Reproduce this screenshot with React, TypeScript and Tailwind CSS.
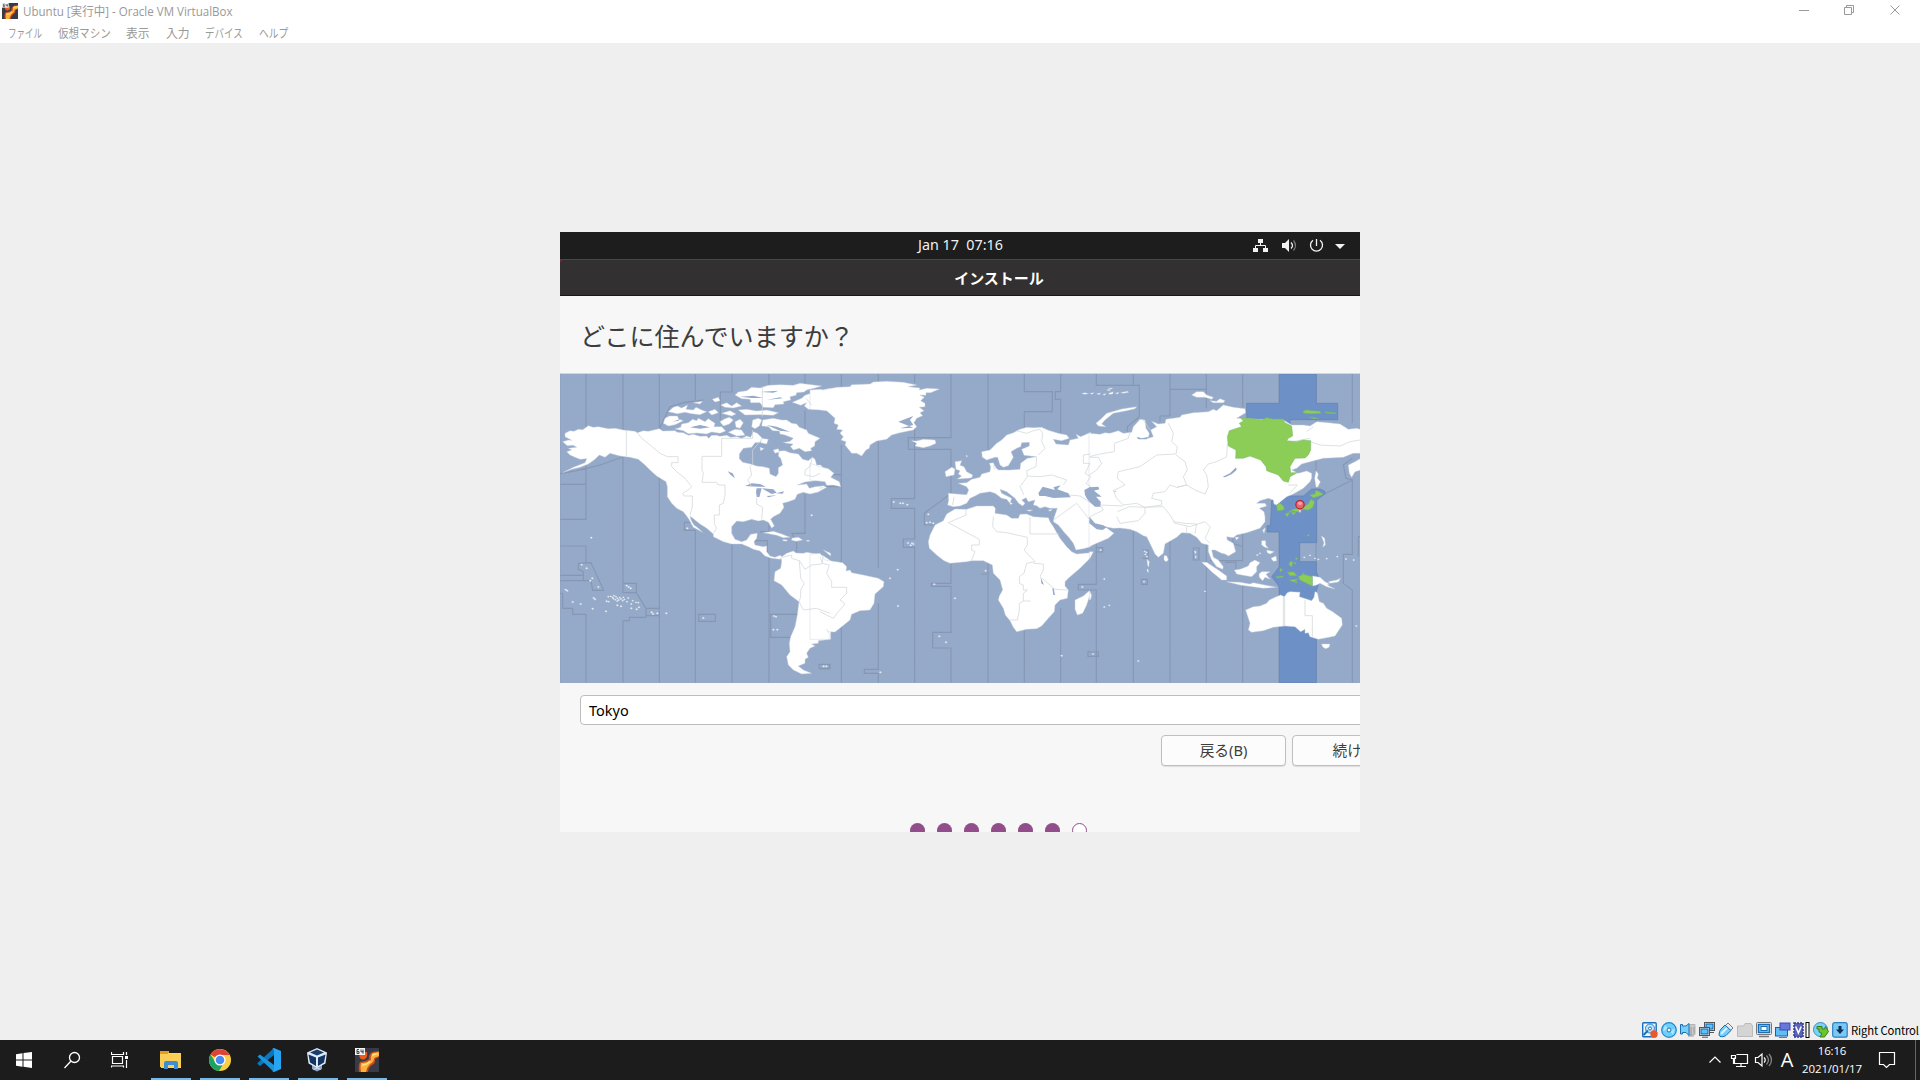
import React from "react";

const UI = "font-['Open_Sans','Noto_Sans_CJK_JP',sans-serif]";
const GUEST = "font-['Noto_Sans','Noto_Sans_CJK_JP',sans-serif]";

function GuestLogo({ className }: { className: string }) {
  return (
    <svg viewBox="0 0 24 24" className={className}>
      <rect width="24" height="24" fill="#383a47" />
      <path d="M24 3 L17 4 Q13 7 14 11 Q10 14 5 14 Q3 17 4 24 H13 Q13 20 17 17 Q21 15 20 11 L24 9Z" fill="#c4501a" />
      <path d="M24 4 L18 5 Q15 8 16 12 Q12 15 6 15 Q5 18 6 24 H11 Q12 19 15 16 Q19 14 19 10 L24 8Z" fill="#fdb13c" />
      <path d="M17 7 L23 5.500 M7 17 Q12 17 15 13" stroke="#ffe28a" strokeWidth="1.4" fill="none" />
      <path d="M4 8 Q6 13 10 11 Q13 9 12 4 L8 4Z" fill="#ef5a1b" />
      <rect width="10" height="7" fill="#f4f4f4" />
      <path d="M4 1.5H2V5.5H4V3.5H2M6 1.5V3.8H8.5M8 1.5V5.7" stroke="#333" strokeWidth=".9" fill="none" />
    </svg>
  );
}

const menus = [
  { t: "ファイル", w: "w-[50px]", s: "scale-x-[0.71]" },
  { t: "仮想マシン", w: "w-[68px]", s: "scale-x-[0.88]" },
  { t: "表示", w: "w-[40px]", s: "scale-x-[0.98]" },
  { t: "入力", w: "w-[39px]", s: "scale-x-[0.98]" },
  { t: "デバイス", w: "w-[54px]", s: "scale-x-[0.79]" },
  { t: "ヘルプ", w: "w-[40px]", s: "scale-x-[0.81]" },
];

function TitleBar() {
  return (
    <header className={`h-[43px] shrink-0 bg-white text-[#999] ${UI}`}>
      <div className="flex h-[22px] items-center justify-between pl-[2px]">
        <div className="flex items-center gap-[5px]">
          <GuestLogo className="h-4 w-4" />
          <span className="origin-left whitespace-nowrap pt-[2px] text-[12px] leading-[20px] scale-x-[0.962]">Ubuntu [実行中] - Oracle VM VirtualBox</span>
        </div>
        <svg width="140" height="22" fill="none" stroke="#999">
          <path d="M19 10.5H29" />
          <path d="M64.5 7.5H71.5V14.5H64.5ZM66.500 7V5.500H73.500V12.500H72" />
          <path d="M110.500 5.500L119.500 14.500M119.500 5.500L110.500 14.500" />
        </svg>
      </div>
      <nav className="flex h-[21px] pl-2 pt-[1px]">
        {menus.map((m) => (
          <div key={m.t} className={`${m.w} shrink-0 text-[12px] leading-[22px]`}>
            <span className={`inline-block origin-left whitespace-nowrap ${m.s}`}>{m.t}</span>
          </div>
        ))}
      </nav>
    </header>
  );
}

const islands = (pts: number[][], r = 3) =>
  pts.map(([x, y], i) => <ellipse key={i} cx={x} cy={y} rx={r} ry={r * 0.75} />);

function WorldMap() {
  return (
    <svg viewBox="0 0 2400 927" width="800" height="309" className="block shrink-0">
      <rect width="2400" height="927" fill="#95a9c9" />
      <g stroke="#8697b3" strokeWidth="3.4" fill="none">
        <g transform="translate(0 -12)">
          <path d="M78 12V343M0 343H78V448H0M0 528H78V578M55 580L93 578L131 661H98L93 632H0M55 580V598L70 605V632M0 616H70M8 670V715H38V733H78V938M0 670H8M189 12V180M189 262V668M189 640H229V668H189M229 668L258 715V742H208V752H189V938M258 715H298V737H258M298 12V176L330 110L370 98L430 90M298 320V715M298 737V938M406 12V90M400 457H373V481H406V938M516 12V66H481V150M516 522V938M416 733H466V754H416ZM627 12V50M627 490V440M627 565V938M627 733H715M632 733V802H692M735 12V50M735 120V180M735 372V490H696L710 520V545M582 512H622V558M600 485H640M0 311L50 302L120 285L190 260M775 883H810V896H778V883" />
        </g>
        <g transform="translate(780 -12)">
          <path d="M64 12V50M64 225V938M28 883V896H0M175 12V35M175 213V595M175 700V898H133V910H175V938M284 12V38M284 150V386H214V415H284V507H250V532H284V938M393 12V203H265V238H393V370L313 430V465H345M393 580V640H334V649H393V787H338V834H393V938M504 12V250M504 580V612H484M504 612V938M613 12V65H697V125H613V175M613 780V938M722 12V65H706V88H722V200M722 715V938M810 643H775V660H810M810 845H804V860H810M15 314H64M15 350H60" />
        </g>
        <g transform="translate(1590 -12)">
          <path d="M19 12V46H148V140L112 170V185M0 643H19V510M0 660H19V938M0 846H25V859H0M19 533H38V546H19M130 12V46M130 475V938M240 12V138M240 58H349V12M240 138H210V155M240 510V938M349 58V115M349 520V938M458 12V112M458 490V572H360M458 648V938M568 12V938M678 12V938M787 12V160M787 265L760 285L768 325L787 330L703 372M787 330V553H760V640L787 660V938M158 540H175V565H158M154 628H172V643H154ZM310 534H327V570H310ZM405 577H438V600M429 500V520L458 530M810 500H805V560M640 770L575 805" />
        </g>
      </g>
      <g fill="#6d91c6" stroke="#6280b0" strokeWidth="2" transform="translate(1590 -12)">
        <path d="M568 12H679V100H743V149H600V180H470V100H568Z" />
        <path d="M600 378H640L665 357H690L705 364V372L680 390V518H629V575H679V605L690 630L680 660L667 692H630L568 680V650L545 620L568 590V486H531V467H541L545 392L575 380Z" />
        <path d="M568 750H679V938H568Z" />
      </g>
      <g fill="#fff" stroke="#c6d1db" strokeWidth="1.3" strokeLinejoin="round">
        <g transform="translate(0 -12)">
          <path d="M15 190L30 182L42 184L55 178L68 179L85 167L100 172L115 170L145 176L165 175L190 180L225 184L232 188L250 182L265 184L298 176L308 183L345 182L352 187L370 188L385 196L400 193L420 199L440 198L446 205L455 196L470 196L480 199L500 196L512 202L530 200L545 205L560 198L572 202L580 185L592 190L607 205L600 217L585 218L575 232L550 235L538 252L538 266L548 277L575 283L590 288L610 290L628 295L630 312L648 320L655 310L655 293L668 285L662 265L655 258L657 243L675 242L690 248L715 252L728 268L745 272L757 262L765 268L770 285L782 285L795 300L812 305V325L790 323L780 330L760 333L735 336L712 345L740 342L748 355L765 350L790 347L800 352L775 366L750 372L730 367L712 373L705 388L685 395L668 400L672 412L660 430L640 440L632 448L643 468L635 474L625 457L610 450L595 453L575 448L550 455L530 453L515 470V490L525 508L545 515L560 510L572 493L592 490L590 505L582 515L585 525L610 530L620 528V545L630 558L645 562L660 556L668 562L660 568L635 565L615 558L600 543L580 538L565 530L545 522L515 522L490 515L460 500V492L440 475L420 462L390 438L393 450L402 465L415 475L428 487L400 472L385 445L370 425L350 415L335 400L322 380V350L318 335L290 318L270 300L255 285L235 268L210 262L180 258L150 250L135 262L118 255L105 268L85 282L60 292L35 298L8 308L40 292L75 278L80 266L60 268L45 262L30 255L20 245L35 240L25 235L50 232L40 226L22 227L8 215L25 210L35 211L15 200Z" />
          <path d="M525 75L535 66L560 62L575 52L600 54L625 46L660 44L700 46L720 40L785 48L765 54L740 60L732 66L710 68L708 76L690 80L692 90L670 95L672 102L645 104L640 113L610 112L600 98L572 98L570 88L545 86Z" />
          <path d="M575 170L578 150L595 145L605 150L598 168L585 176ZM608 150L640 145L665 150L680 150L695 160L710 162L718 172L740 180L745 190L780 205L765 215L764 228L752 235L755 242L735 245L718 235L700 240L690 228L675 225L670 218L690 214L700 205L675 195L660 192L658 183L638 182L625 170L605 168Z" />
          <path d="M310 160L315 145L328 138L352 138L357 148L370 152L345 164L325 168ZM345 177L362 172L365 162L385 158L398 148L410 152L415 145L435 155L445 146L465 160L462 170L485 170L497 183L480 190L455 186L440 192L410 189L385 191L370 182Z" />
          <path d="M325 125L340 112L352 108L365 114L383 105L378 118L400 120L408 112L425 120L440 125L420 134L395 131L375 127L352 131ZM400 98L428 94L420 102ZM457 88L475 82L480 92L465 96ZM482 105L500 98L515 108L530 98L545 108L520 114L495 112ZM445 125L465 118L475 128L455 135ZM485 130L510 122L528 132L515 138ZM535 120L560 118L590 123L620 120L655 128L640 136L600 134L555 135ZM480 155L495 146L508 142L520 150L508 162L490 168ZM525 155L540 148L550 158L540 175L528 172ZM505 187L525 178L545 180L555 196L530 198ZM605 205L625 208L620 222L602 218ZM640 240L655 236L658 246L645 250ZM600 232L612 236L602 242Z" />
          <path d="M697 97L725 85L735 76L775 62L812 55V125L780 118L745 118L733 108L740 98L722 106ZM610 488L640 484L665 492L690 502L670 503L650 496ZM697 504L715 502L728 510L708 514L694 510ZM668 509H680L682 513H670ZM740 511H748V514H740ZM790 540L812 558V550Z" />
          <path d="M663 562L680 550L700 543L708 549L730 550L740 547L770 552L790 557L812 572V808L775 812V820L755 822L765 828L750 835L740 850L745 862L735 868V880L715 888L730 900L755 910L725 912L700 900L685 885L680 860L690 845L688 820L692 800L705 770L712 735L717 695L690 675L665 645L642 632L645 605L662 595L665 575Z" />
          {islands([[65, 584], [80, 595], [97, 625], [91, 632], [115, 651], [17, 659], [22, 662], [38, 696], [62, 702], [101, 684], [105, 688], [98, 716], [138, 724], [94, 503], [200, 647], [206, 651], [212, 655], [275, 727], [279, 732], [292, 730], [319, 730], [430, 744], [642, 738], [648, 740], [640, 779], [652, 779], [755, 436], [140, 694], [172, 706], [183, 709], [214, 715], [230, 718], [237, 712], [382, 475]])}
          {islands([[145, 680], [152, 679], [158, 682], [162, 677], [168, 680], [160, 686], [166, 689], [172, 685], [176, 690], [183, 687], [188, 692], [193, 688], [179, 683], [190, 682], [172, 693], [205, 684], [201, 695], [218, 692], [214, 702], [228, 697], [235, 698], [146, 695]], 2.6)}
        </g>
        <g transform="translate(780 -12)">
          <path d="M-30 60L0 58L10 60L50 52L90 50L95 44L150 42L160 36L200 34L250 37L290 45L265 50L300 54L298 60L320 55L358 57L332 68L318 68L318 76L300 75L313 82L302 92L315 100V110L298 112L312 122L300 128L308 137L290 145L282 158L290 170L280 180L240 188L215 195L200 208L170 213L150 225L148 235L138 240L125 258L110 250L95 250L75 225L78 215L63 210L70 200L60 190L68 180L50 178L55 165L42 160L45 145L20 122L0 120L-30 118Z" />
          <path d="M-30 280L0 290L25 296L42 310L32 322L58 335L62 350L40 345L20 346L15 335L-30 330ZM0 350L10 352L0 358Z" />
          <path d="M-30 553L0 550L15 570L40 574L68 578L80 590L78 603L90 600L95 608L130 615L175 625L192 635L190 650L165 672L162 700L150 720L120 722L95 733L90 750L65 770L45 786L25 785L20 778L30 797L25 808H-30Z" />
          <path d="M385 370L410 372L440 374L446 360L440 350L415 340L440 338L455 328L480 322L485 312L510 305L512 290L508 280L520 278L525 290L535 300L570 300L600 298L602 280L622 265L650 260L612 256L605 238L628 228V217L605 218L602 230L590 235L573 245L580 262L565 287L550 292L540 285L533 262L525 262L500 270L487 262L485 245L510 240L530 220L545 210L560 195L580 188L600 178L620 172L640 173L665 172L685 181L715 190L740 195L748 205L725 212L700 208L708 222L745 225L750 210L775 205L768 193L782 200L812 187V530L790 536L768 540L760 520L745 500L735 490L715 465L700 455L702 443L712 415L690 415L675 410L660 415L650 407L640 405L645 390L625 395L618 383L605 390L615 400L608 408L596 400L585 385L560 365L540 358L545 370L575 385L570 400L560 388L545 385L525 370L510 365L480 370L465 378L450 385L440 400L420 408L400 410L383 405L386 390Z" />
          <path d="M405 417L440 418L470 408L520 408L526 415L525 430L545 433L560 435L575 445L595 445L600 433L620 432L640 440L685 443L690 455L700 470L720 505L740 530L755 545L770 552L812 548V560L805 570L780 595L745 625L735 635V648L745 660L742 685L720 690L705 705L703 725L685 745L665 768L650 776L620 778L590 785L580 772L570 752L556 735L550 715L535 690L538 678L548 660L540 630L520 610L517 585L490 572L455 572L440 575L390 580L372 572L350 555L328 535L325 515L330 495L345 465L370 452L380 432Z" />
          <path d="M405 275L425 272L420 286L432 290L440 305L458 315L455 323L445 325L412 327L425 318L415 312L420 302L408 298ZM375 305L395 292L405 297L402 315L378 320ZM275 212L290 213L310 208L345 210L348 220L330 228L310 233L285 228L290 220ZM765 690L790 678L808 662L812 668L800 705L788 730L772 735L765 718ZM568 397L578 400L572 404ZM620 420L638 420L628 424ZM685 420L697 418L690 424ZM520 288L528 290L524 298ZM785 70L795 68L805 71L795 73ZM438 255L443 258L440 262Z" />
          {islands([[221, 396], [241, 400], [249, 400], [262, 404], [325, 433], [320, 458], [330, 457], [340, 460], [264, 519], [276, 520], [272, 526], [280, 522], [233, 599], [210, 625], [343, 643], [405, 685], [234, 708], [358, 799], [378, 817], [181, 907], [725, 857], [497, 602], [787, 651], [11, 889], [19, 889]])}
        </g>
        <g transform="translate(1590 -12)">
          <path d="M-3 190L30 193L45 188L60 190L85 182L100 190L125 187L130 170L150 148L165 150L168 175L178 190L175 205L190 200L182 180L200 170L185 154L205 162L225 160L228 148L270 142L275 135L310 128L355 125L370 118L380 122L400 105L430 112L465 116L467 128L440 145L460 145L500 148L580 150L605 165L640 165L660 168L680 155L715 158L750 162L775 178L800 175L812 178V250H790L760 262L700 265L660 275L635 282L620 295L605 300L625 310L650 303L665 310L665 325L660 335L640 355L610 372L590 380L575 392L560 405L552 402L550 390L535 385L510 392L500 400L525 400L530 408L508 415L522 425L525 440V455L510 475L470 488L440 495L430 503L410 500L412 510L430 520L437 545L415 558L405 552L395 550L375 540L365 540L370 562L385 570L400 590L398 598L380 590L365 570L355 545V525L335 520L320 502L300 490L275 488L260 502L225 522L220 550L205 562L195 552L175 510L170 500L160 497L140 485L120 478L90 474L70 475L45 470L72 490L55 505L20 520L-3 530Z" />
          <path d="M18 160L35 145L50 130L95 117L140 110L135 116L110 122L70 130L45 150L35 162L48 170L25 168ZM305 75L320 65L340 65L350 75L370 82L365 88L345 82L320 82ZM360 92L380 94L390 86L405 92L400 98L370 98ZM678 302L685 312L682 325L691 335L684 350L678 352L674 325ZM775 285L795 275L812 265V300L795 305L785 322L778 310ZM335 577L350 577L385 600L410 618L410 630L395 630L365 605ZM410 635L450 637L480 642L490 638L560 652L520 655L450 645ZM433 600L450 598L475 588L480 578L495 570L510 578L500 590L500 605L485 620L455 615L440 612ZM507 612L515 605H540L528 613L540 628L525 622L518 632L508 622ZM515 512H527V525L535 535L525 532L515 525ZM530 540L553 545L540 552L532 548ZM543 565L558 558L560 572L550 574ZM518 480L526 474L522 490ZM435 502H447L440 510ZM222 557L230 557L235 570L228 575L222 570ZM667 618L690 622L705 635L718 642L712 645L735 657L710 650L690 640L680 645L667 648ZM715 635L740 630L752 625L745 636L720 640ZM-2 545L10 545L5 555L-2 568ZM-2 665L5 675L2 688L-2 690Z" />
          <path d="M467 720L490 710L510 708L530 700L538 690L555 682L572 675L583 680L592 668L600 665L630 667L628 680L665 692L672 682L675 665L682 668L688 695L700 700L710 715L728 725L755 745L757 765L735 798L710 803L685 808L660 800L655 788L645 790L645 778L632 785L615 770L585 768L550 772L520 782L485 787L475 780L480 760ZM695 822H720L717 832L707 836L698 831Z" />
          <path d="M0 70L12 68L6 73ZM20 71L32 69L28 74ZM38 74L48 70L44 76ZM50 60L58 58L60 63ZM56 70L70 65L68 72L58 73ZM76 70L86 67L84 72ZM92 68L112 64L116 67L100 70ZM55 54L68 55L62 58ZM169 544L171 548M171 568L178 575L176 590L173 588ZM172 596L175 600L175 608L171 602ZM312 542L319 545L316 552ZM316 556L320 560L316 566ZM694 498L704 505L706 525L698 532L702 518Z" />
          {islands([[164, 544], [169, 547], [166, 553], [171, 560], [32, 540], [43, 627], [58, 706], [43, 711], [162, 635], [345, 664], [145, 873], [9, 852], [643, 562], [660, 556], [675, 565], [685, 568], [710, 566], [742, 560], [768, 567], [791, 570], [799, 768], [502, 555], [510, 550]], 2.6)}
        </g>
      </g>
      <g fill="#95a9c9">
        <g transform="translate(0 -12)">
          <path d="M555 348L575 340L600 342L618 350L595 350ZM590 355H605L598 382L590 380L588 365ZM605 355L640 358L650 368L635 372L618 362ZM620 378L650 376L625 382ZM648 370L672 364L668 371ZM503 304L518 310L525 325L512 315Z" />
          <path d="M540 80L580 77L610 84L575 84ZM600 66L655 62L640 68ZM620 90L660 82L668 85ZM620 165L650 170L690 185L660 182ZM640 215L700 222L690 230ZM390 172L420 165L450 172L420 176ZM338 155L360 147L355 152Z" />
        </g>
        <g transform="translate(780 -12)">
          <path d="M655 370L668 350L685 355L705 360L700 352L722 346L712 358L745 370L752 382L700 384L675 378L658 378ZM793 360L812 350V400L800 385L795 375ZM662 622L672 645L664 640ZM697 655H701L705 675H700ZM235 155L280 138L270 150L280 165L240 175L280 173Z" />
        </g>
        <g transform="translate(1590 -12)">
          <path d="M-2 352L25 350L28 358L12 362L35 380L18 380L32 395V410L15 410L-2 395ZM-2 440L15 460L40 466L50 472L38 480L20 478L-2 460ZM398 320L420 310L438 292L440 300L425 313L405 322ZM140 200L155 205L178 200L170 208H145ZM75 362L80 365L70 364Z" />
        </g>
      </g>
      <g fill="none" stroke="#d0d6d7" strokeWidth="2.2" strokeLinejoin="round">
        <path transform="translate(0 -12)" d="M199 180V258M232 188L245 205L270 225L300 250L322 260H354V278H335V290L350 305L375 325L395 350L385 360L368 370L372 378H397V410L390 435M578 180V205H485V259H426V300L430 310L426 337H470L475 345H495V375L490 400L478 405V435H463V460L470 475L460 490M607 50V140M600 215L578 240V280L570 290L575 315L563 330L575 350M590 382V402L608 412L605 448M757 262L750 290L735 300V315L760 320L780 310M738 85L755 105M665 562L695 555V565L718 572L735 598L755 585L785 582L790 560M718 572L722 625L733 640L722 660V680L717 695M717 695L730 720L770 715L810 730" />
        <path transform="translate(780 -12)" d="M0 560L8 580L28 585L20 610L35 635V652H80V670L60 690L75 702L55 725L40 745L0 725M402 380L398 405M590 182L620 190L640 182L660 178L668 190L665 215L675 235L655 255M650 262L648 290L620 302L622 320L600 350L612 375M622 318L660 320L695 315L740 330L730 345M750 375L780 378L812 398M700 450L735 425L770 400L790 425L810 450M438 418V435L385 458L478 508V525H455V540L465 545L455 570M520 440L518 470L530 485L560 488L622 502M630 440V492H718M622 502V525L612 540L645 575L620 580L612 610L598 620V640L610 645V660H622L610 670V693H632M610 693L598 700V722L592 750H570M640 580L670 582V600L660 620L690 645L705 658L742 660M812 252L790 255V280H810L795 310L812 320L798 340L812 350" />
        <path transform="translate(1590 -12)" d="M120 188L115 205L73 220V245L30 252L-2 260M0 262H25L35 280L20 300L-2 315M160 150L180 180M235 160L250 190L245 215L262 230L258 252L200 255L150 290L85 305L82 325L105 345L70 362L80 385L100 405L140 400L165 412L215 405V392L185 385L190 370L225 365L240 345L260 352L290 345L280 320L292 300L285 275L258 255M260 352L290 345L315 360L345 372L355 350L350 315L340 300L355 282L380 275L410 260L412 220M0 440L40 420L30 405L100 408M82 425L118 410L165 412V430L145 452L90 460L80 440M165 412L220 410L240 435L255 460L300 470L345 455L360 470L355 485L345 505L360 520M250 455L285 460L320 462L315 490M290 470V490M580 680V768M584 680V768M645 690V737H667V800M650 185L670 170M660 215L690 225L750 228L780 215L810 210M605 215L660 205M595 345H622L600 370" />
      </g>
      <g transform="translate(1590 -12)" fill="#8ccd57" stroke="#74b66b" strokeWidth="1.5" strokeLinejoin="round">
        <path d="M450 142L465 145L490 146L515 150L530 143L552 148L578 147L585 158L605 168L608 198L595 205L590 212L620 215L640 210L662 212V240L655 255L645 264L615 265L600 290L602 308L622 308L600 320L595 337L580 333L565 315L530 302L528 290L512 270L480 258L460 265L437 265L438 240L415 228L412 200L418 182L455 170L448 160L460 153ZM640 124L650 120L665 122L690 124L692 130L660 131L640 129ZM705 126L735 128L738 131L710 129ZM660 141L685 145L670 146ZM560 405L570 400L580 408L583 418L575 421L562 422ZM660 375L675 372L678 361L700 372L690 377L670 383ZM663 388L674 395L668 412L655 420L640 418L620 425L608 423L590 430L610 418L640 412L655 402ZM585 432L598 430L592 440ZM603 428L618 425L612 434ZM625 620L640 613L667 620V648L650 640L630 630ZM592 607L612 606L620 617L600 617ZM598 577L608 574L606 590L598 586ZM558 620L580 618L578 622L560 623ZM570 595L578 600L570 605ZM598 630L625 628L610 636Z" />
        {islands([[655, 496], [619, 566], [615, 580], [640, 612], [618, 637]])}
        <path d="M626 418V427H633V418Z" fill="#ddd" stroke="#999" />
        <circle cx="630" cy="404" r="12.5" fill="#ed6570" stroke="#b9202c" strokeWidth="3.5" />
        <ellipse cx="630" cy="400" rx="7" ry="5" fill="#ffa0a5" stroke="none" />
      </g>
      <path d="M0 0V927" stroke="#8ea0be" strokeWidth="3" />
    </svg>
  );
}

function GuestScreen() {
  return (
    <section className={`flex h-[600px] w-[800px] shrink-0 flex-col overflow-hidden bg-[#f7f7f7] ${GUEST}`}>
      <div className="grid h-[27px] shrink-0 grid-cols-[1fr_auto_1fr] items-center bg-[#1d1d1d] text-[#f2f2f2]">
        <span />
        <span className="whitespace-pre pb-[2px] pl-[1px] text-[14.3px] leading-[24px]">Jan 17  07:16</span>
        <svg width="110" height="26" className="justify-self-end">
          <g fill="#f2f2f2">
            <path d="M8 6h5v4H8zM3 15h5v4H3zM13 15h5v4h-5z" />
            <path d="M10.500 10v3M5.500 15v-2.500h10V15" stroke="#f2f2f2" fill="none" />
            <path d="M32 10h3l4-4v13l-4-4h-3z" />
            <path d="M41 9.500q3 3 0 6" stroke="#f2f2f2" strokeWidth="1.300" fill="none" />
            <path d="M43.500 7.500q4 5 0 10" stroke="#777" strokeWidth="1.300" fill="none" />
            <path d="M63 7.300a6 6 0 1 0 7 0M66.500 6v7" stroke="#f2f2f2" strokeWidth="1.300" fill="none" />
            <path d="M85 11h10l-5 5z" />
          </g>
        </svg>
      </div>
      <div className="h-[37px] shrink-0 bg-[#a3182c]">
        <div className="h-full w-[878px] rounded-tl-[4px] border-b border-t border-b-[#1b1919] border-t-[#494648] bg-[#323031] text-center text-[15px] font-bold leading-[36px] text-white">インストール</div>
      </div>
      <h1 className="h-[78px] shrink-0 border-b border-[#d5d5d5] pl-5 text-[25.1px] leading-[80px] text-[#3d3d3d]">どこに住んでいますか？</h1>
      <WorldMap />
      <div className="flex h-[149px] w-[878px] shrink-0 flex-col pl-5 pt-3">
        <div className="h-[30px] rounded-[4px] border border-[#bdbdbd] bg-white pl-2 text-[14.500px] leading-[28px] text-black">Tokyo</div>
        <div className="mt-[10px] flex gap-[6px] pl-[581px] text-[14.700px] leading-[28px] text-[#3d3d3d]">
          <div className="h-[31px] w-[125px] rounded-[4px] border border-[#bfbfbf] bg-[#fcfcfc] text-center shadow-[0_1px_1px_rgba(0,0,0,0.1)]">戻る(B)</div>
          <div className="h-[31px] w-[125px] rounded-[4px] border border-[#bfbfbf] bg-[#fcfcfc] text-center shadow-[0_1px_1px_rgba(0,0,0,0.1)]">続ける</div>
        </div>
        <div className="mt-[57px] flex gap-3 pl-[330px]">
          {[0, 1, 2, 3, 4, 5].map((i) => (
            <span key={i} className="h-[15px] w-[15px] shrink-0 rounded-full bg-[#924d8b]" />
          ))}
          <span className="h-[15px] w-[15px] shrink-0 rounded-full border border-[#924d8b] bg-white" />
        </div>
      </div>
    </section>
  );
}

const BL = "#1c6eb4";
const statusIcons: React.ReactNode[] = [
  <>
    <rect x=".7" y=".7" width="13.500" height="14" rx="1" fill="#eaf7ff" stroke="#1a6fbd" strokeWidth="1.400" />
    <circle cx="8" cy="6.500" r="4.500" fill="#bfe6fc" stroke="#2c82c9" />
    <circle cx="8" cy="6.500" r="1.500" fill="#fff" stroke={BL} />
    <path d="M1.500 13L6 8.500" stroke={BL} strokeWidth="2" />
    <circle cx="12" cy="12" r="3.700" fill="#ee5828" />
  </>,
  <>
    <circle cx="8" cy="8" r="7.300" fill="#6cd0fb" stroke="#2088cc" strokeWidth="1.200" />
    <path d="M4 3l4 5-6 1zM12 13L8 8l6-1z" fill="#a9e6ff" />
    <circle cx="8" cy="8" r="2" fill="#fff" stroke={BL} />
  </>,
  <>
    <path d="M9 2.500h6v10H9z" fill="#c9c9c9" stroke="#b5b5b5" />
    <path d="M11 5v9M14 5v6M8 14h6" stroke="#999" />
    <path d="M.500 2.500h2V4H6l3-2.500v12L6 10.500H2.500V12h-2z" fill="#76cff8" stroke={BL} />
  </>,
  <>
    <rect x="5.500" y=".5" width="10" height="8" fill="#eee" stroke="#555" />
    <rect x="7" y="2" width="7" height="5" fill="#5cc4fb" stroke="#1560a3" />
    <path d="M10 10.500h5" stroke="#555" />
    <rect x=".5" y="5.500" width="10" height="8" fill="#eee" stroke="#555" />
    <rect x="2" y="7" width="7" height="5" fill="#58c4fc" stroke="#1560a3" />
    <path d="M3 15.200h6" stroke="#555" />
  </>,
  <>
    <path d="M10 1l5 5-2.500 2.500-5-5z" fill="#eee" stroke="#777" />
    <path d="M7 3l6 5.500-5 5q-3 2-6 1L1 13q0-4 2-6z" fill="#75cdfa" stroke={BL} />
    <path d="M3 12l6-6" stroke="#d6f4ff" strokeWidth="2" />
  </>,
  <path d="M.500 4H6.500L8 1.500H14L15.500 4v10.500H.5z" fill="#d4d4d4" stroke="#bbb" />,
  <>
    <rect x="0.500" y=".5" width="15" height="12" rx="1" fill="#eee" stroke="#777" />
    <rect x="2.500" y="2.500" width="11" height="8" fill="#7bcdf8" stroke={BL} strokeWidth="1.400" />
    <rect x="5" y="4.500" width="6" height="4" fill="#fff" stroke={BL} />
    <path d="M3 14.500h10" stroke="#777" strokeWidth="1.500" />
  </>,
  <>
    <rect x=".5" y="5.500" width="12" height="8.500" fill="#5fbff5" stroke="#1560a3" />
    <rect x="5" y="1" width="10" height="7" fill="#6777da" stroke="#3f4db5" />
    <path d="M4 15.500h8" stroke="#777" fill="none" />
  </>,
  <>
    <rect x="0" y="1" width="9" height="14" fill="#5963bb" stroke="#333e8d" strokeDasharray="2 1" strokeWidth="1.500" />
    <path d="M1.700 4.500l2.700 6.500L7.200 4.500" stroke="#fff" strokeWidth="1.600" fill="none" />
    <rect x="12" y=".5" width="3" height="15" fill="#fff" stroke="#000" />
  </>,
  <>
    <circle cx="7.500" cy="7.500" r="7" fill="#7ad2f8" stroke="#3a8fc8" />
    <path d="M4 4.500h5v2.500h2.500l1-2.500 3 5-4 5.500H7l2-3.500-3-1.500V7H4z" fill="#6cc52c" stroke="#3d7e12" />
  </>,
  <>
    <rect x=".7" y=".7" width="14.500" height="14.500" rx="2" fill="#7ac9f4" stroke="#2a7fbd" strokeWidth="1.200" />
    <path d="M6.500 4h3v3.500H12L8 12 4 7.500h2.500z" fill="#0e2f5b" />
  </>,
];

function StatusBar() {
  return (
    <div className="flex h-[20px] shrink-0 items-center justify-end gap-[3px] pr-[1px]">
      {statusIcons.map((icon, i) => (
        <svg key={i} width="16" height="16" viewBox="0 0 16 16" className="shrink-0 overflow-visible">{icon}</svg>
      ))}
      <span className="w-[68px] whitespace-nowrap font-['Noto_Sans_CJK_JP',sans-serif] text-[11.300px] leading-5 tracking-[-0.15px] text-black">Right Control</span>
    </div>
  );
}

const apps = [
  <svg key="e" width="24" height="24">
    <path d="M1 3h9v4H1z" fill="#dc9a17" /><path d="M2 5h20v15H2z" fill="#ffd868" /><path d="M1 4h8l1 1.500H22V19H1z" fill="#fbcf57" />
    <path d="M1 3h8v3H1z" fill="#e0a01c" /><path d="M5 21v-6q0-2 2-2h10q2 0 2 2v6h-4v-4H9v4z" fill="#3d8fd4" />
  </svg>,
  <svg key="c" width="24" height="24">
    <circle cx="12" cy="12" r="11" fill="#fbcd43" />
    <path d="M12 12L2.500 6.500A11 11 0 0 1 21.600 7H12z" fill="#db4437" />
    <path d="M12 12L7.500 14.500 2.500 6.500A11 11 0 0 0 11 23l5-8.500z" fill="#1da261" />
    <circle cx="12" cy="12" r="5.600" fill="#fff" /><circle cx="12" cy="12" r="4.300" fill="#4a8af4" />
  </svg>,
  <svg key="v" width="24" height="24">
    <path d="M17 0v7L3 18 .500 16v-1z" fill="#0877c1" /><path d="M.500 8.500L3 6.500 17 17v7z" fill="#1d94da" />
    <path d="M17 0l7 3v18l-7 3-2-1q2 0 2-2V3q0-2-2-2z" fill="#27a5f2" />
  </svg>,
  <svg key="b" width="24" height="24" className="-ml-[3px]">
    <path d="M7 17h10v4l-5 2.500-5-2.500z" fill="#8da5cb" /><path d="M2 4.500L12 0l10 4.500-1.500 11L12 20l-8.500-4.500z" fill="#dfeaf6" />
    <path d="M5 4.500l7-3 7 3-7 3z" fill="#173d6c" /><path d="M3.500 6.500l7.500 3v8.500l-6-3.500zM20.500 6.500l-7.500 3v8.500l6-3.500z" fill="#123563" />
    <path d="M8.500 21.500q3.500-3 7 0" stroke="#dfe8f6" fill="none" />
  </svg>,
  <GuestLogo key="g" className="h-6 w-6" />,
];

function Taskbar() {
  return (
    <footer className={`flex h-[40px] shrink-0 justify-between bg-[#1c1c1c] text-white ${UI}`}>
      <div className="flex">
        <div className="flex w-12 items-center justify-center">
          <svg width="16" height="16" fill="#fff"><path d="M0 2.300l6.500-1v6.200H0zM7.500 1.100L16 0v7.500H7.500zM0 8.500h6.500v6.200L0 13.700zM7.500 8.500H16V16l-8.500-1.200z" /></svg>
        </div>
        <div className="flex w-12 items-center justify-center">
          <svg width="18" height="18" fill="none" stroke="#fff" strokeWidth="1.300"><circle cx="11.500" cy="6.500" r="5" /><path d="M7.800 10.200L1.500 17" /></svg>
        </div>
        <div className="flex w-[55px] items-center pl-[15px]">
          <svg width="18" height="18" fill="none" stroke="#fff" strokeWidth="1.200"><path d="M1.500 5.500h10v7h-10zM.500 1v2.500h12V1M.500 16.500V15h12v1.500M15.500 1v3M15.500 9v8" /><path d="M14 5h3v3h-3z" fill="#fff" stroke="none" /></svg>
        </div>
        <div className="flex gap-[9px]">
          {apps.map((a, i) => (
            <div key={i} className="flex w-10 justify-center border-b-2 border-[#76b9ed] pt-[8px]">{a}</div>
          ))}
        </div>
      </div>
      <div className="flex">
        <svg width="84" height="40" fill="none" stroke="#fff" strokeWidth="1.200">
          <path d="M9.500 22.500l5.500-5.500 5.500 5.500" />
          <path d="M36.500 14.500h11v9h-13v-6M41 24v3M36 26.500h10M31.500 15.500h4v3h-4zM33.500 19v5" />
          <path d="M55.500 17.500h2.500l4-3.500v12l-4-3.500h-2.500z" />
          <path d="M64 17.500q2.500 2.500 0 5" /><path d="M66.500 15.500q4 4.500 0 9M69 14q5 6 0 12" stroke="#888" />
        </svg>
        <div className="flex w-[4px] items-center justify-center text-[20px] leading-[40px]"><span className="pl-[2px]">A</span></div>
        <div className="ml-[8px] w-[72px] pt-[2px] text-center text-[11.500px] leading-[18px]">
          <div className="tracking-[-0.2px]">16:16</div>
          <div className="whitespace-nowrap tracking-[-0.1px]">2021/01/17</div>
        </div>
        <svg width="52" height="40" fill="none" stroke="#fff" strokeWidth="1.200"><path d="M11.500 12.500h15v12h-5l-3 3-3-3h-4z" /><path d="M47.500 0v40" stroke="#666" strokeWidth="1" /></svg>
      </div>
    </footer>
  );
}

export default function App() {
  return (
    <div className="flex h-[1080px] w-[1920px] flex-col overflow-hidden bg-[#efefef]">
      <TitleBar />
      <main className="flex flex-1 items-start justify-center pt-[189px]">
        <GuestScreen />
      </main>
      <StatusBar />
      <Taskbar />
    </div>
  );
}
